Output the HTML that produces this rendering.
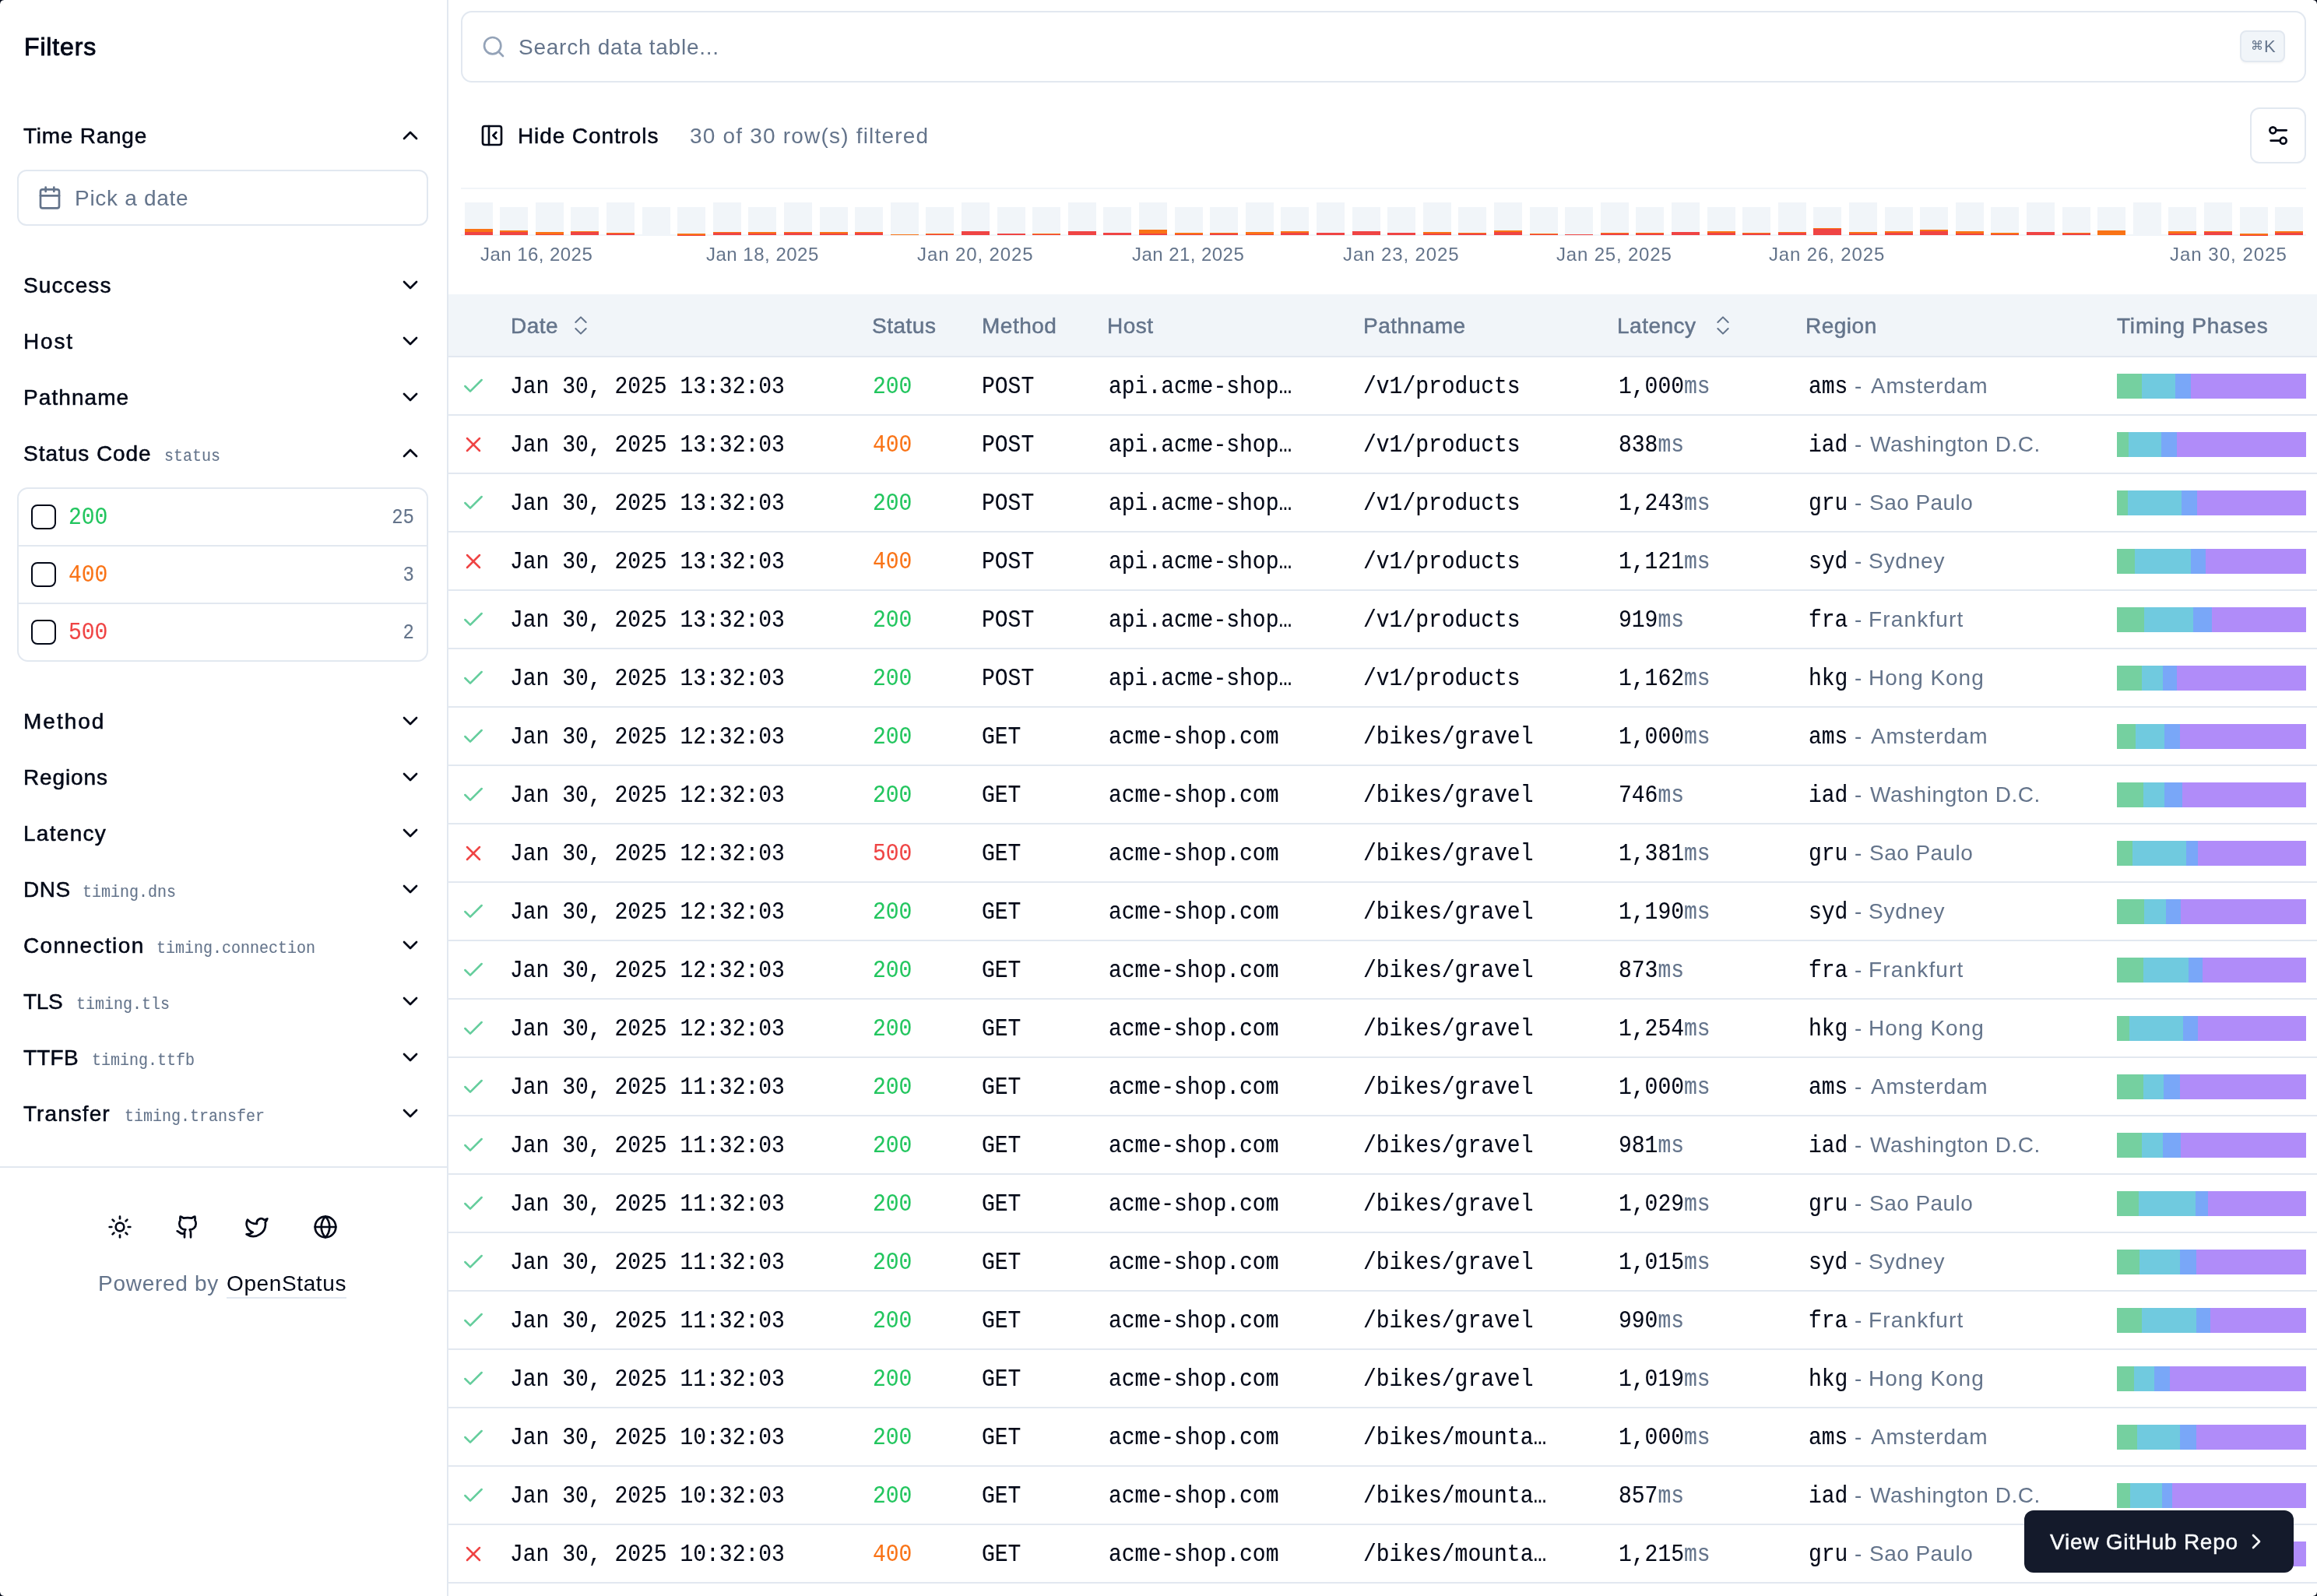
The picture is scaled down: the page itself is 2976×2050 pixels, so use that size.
<!DOCTYPE html><html><head><meta charset="utf-8"><style>
html,body{margin:0;padding:0;background:#fff;}
.root{position:absolute;left:0;top:0;width:2976px;height:2050px;will-change:transform;background:#fff;}
body{width:2976px;height:2050px;position:relative;overflow:hidden;font-family:"Liberation Sans", sans-serif;color:#020817;}
.t{position:absolute;white-space:nowrap;}
.m{font-family:"Liberation Mono", monospace;-webkit-text-stroke:0.1px currentColor;}
.ic{position:absolute;display:block;}
.b{position:absolute;box-sizing:border-box;}
@media (max-width: 2000px) { html{zoom:0.5;} }

</style></head><body><div class="root">
<div class="b" style="left:574px;top:0;width:2px;height:2050px;background:#e2e8f0"></div>
<div class="t" style="left:31px;top:44px;font-size:32px;line-height:32px;color:#020817;letter-spacing:0.85px;-webkit-text-stroke:0.9px currentColor;">Filters</div>
<div class="t" style="left:30px;top:161px;font-size:28px;line-height:28px;color:#020817;letter-spacing:0.75px;-webkit-text-stroke:0.5px currentColor;">Time Range</div>
<svg class="ic" style="left:511px;top:158px;" width="32" height="32" viewBox="0 0 24 24" fill="none" stroke="#020817" stroke-width="2" stroke-linecap="round" stroke-linejoin="round"><path d="m18 15-6-6-6 6"/></svg>
<div class="b" style="left:22px;top:218px;width:528px;height:72px;border:2px solid #e2e8f0;border-radius:12px"></div>
<svg class="ic" style="left:48px;top:238px;" width="32" height="32" viewBox="0 0 24 24" fill="none" stroke="#64748b" stroke-width="2" stroke-linecap="round" stroke-linejoin="round"><rect width="18" height="18" x="3" y="4" rx="2" ry="2"/><line x1="16" x2="16" y1="2" y2="6"/><line x1="8" x2="8" y1="2" y2="6"/><line x1="3" x2="21" y1="10" y2="10"/></svg>
<div class="t" style="left:96px;top:241px;font-size:28px;line-height:28px;color:#64748b;letter-spacing:0.7px;">Pick a date</div>
<div class="t" style="left:30px;top:353px;font-size:28px;line-height:28px;color:#020817;letter-spacing:1.1px;-webkit-text-stroke:0.5px currentColor;">Success</div>
<svg class="ic" style="left:511px;top:350px;" width="32" height="32" viewBox="0 0 24 24" fill="none" stroke="#020817" stroke-width="2" stroke-linecap="round" stroke-linejoin="round"><path d="m6 9 6 6 6-6"/></svg>
<div class="t" style="left:30px;top:425px;font-size:28px;line-height:28px;color:#020817;letter-spacing:1.8px;-webkit-text-stroke:0.5px currentColor;">Host</div>
<svg class="ic" style="left:511px;top:422px;" width="32" height="32" viewBox="0 0 24 24" fill="none" stroke="#020817" stroke-width="2" stroke-linecap="round" stroke-linejoin="round"><path d="m6 9 6 6 6-6"/></svg>
<div class="t" style="left:30px;top:497px;font-size:28px;line-height:28px;color:#020817;letter-spacing:1.07px;-webkit-text-stroke:0.5px currentColor;">Pathname</div>
<svg class="ic" style="left:511px;top:494px;" width="32" height="32" viewBox="0 0 24 24" fill="none" stroke="#020817" stroke-width="2" stroke-linecap="round" stroke-linejoin="round"><path d="m6 9 6 6 6-6"/></svg>
<div class="t" style="left:30px;top:569px;font-size:28px;line-height:28px;color:#020817;letter-spacing:0.96px;-webkit-text-stroke:0.5px currentColor;">Status Code</div>
<svg class="ic" style="left:511px;top:566px;" width="32" height="32" viewBox="0 0 24 24" fill="none" stroke="#020817" stroke-width="2" stroke-linecap="round" stroke-linejoin="round"><path d="m18 15-6-6-6 6"/></svg>
<div class="t m" style="left:211px;top:577px;font-size:20px;line-height:20px;color:#64748b;transform:scaleY(1.1);transform-origin:0 15px;">status</div>
<div class="b" style="left:22px;top:626px;width:528px;height:224px;border:2px solid #e2e8f0;border-radius:14px"></div>
<div class="b" style="left:24px;top:700px;width:524px;height:2px;background:#e2e8f0"></div>
<div class="b" style="left:24px;top:774px;width:524px;height:2px;background:#e2e8f0"></div>
<div class="b" style="left:40px;top:648px;width:32px;height:32px;border:2.5px solid #020817;border-radius:8px"></div>
<div class="t m" style="left:88px;top:652px;font-size:28px;line-height:28px;color:#22c55e;transform:scaleY(1.1);transform-origin:0 21px;">200</div>
<div class="t m" style="right:2444px;top:654px;font-size:24px;line-height:24px;color:#64748b;transform:scaleY(1.12);transform-origin:0 18px">25</div>
<div class="b" style="left:40px;top:722px;width:32px;height:32px;border:2.5px solid #020817;border-radius:8px"></div>
<div class="t m" style="left:88px;top:726px;font-size:28px;line-height:28px;color:#f97316;transform:scaleY(1.1);transform-origin:0 21px;">400</div>
<div class="t m" style="right:2444px;top:728px;font-size:24px;line-height:24px;color:#64748b;transform:scaleY(1.12);transform-origin:0 18px">3</div>
<div class="b" style="left:40px;top:796px;width:32px;height:32px;border:2.5px solid #020817;border-radius:8px"></div>
<div class="t m" style="left:88px;top:800px;font-size:28px;line-height:28px;color:#ef4444;transform:scaleY(1.1);transform-origin:0 21px;">500</div>
<div class="t m" style="right:2444px;top:802px;font-size:24px;line-height:24px;color:#64748b;transform:scaleY(1.12);transform-origin:0 18px">2</div>
<div class="t" style="left:30px;top:913px;font-size:28px;line-height:28px;color:#020817;letter-spacing:2.0px;-webkit-text-stroke:0.5px currentColor;">Method</div>
<svg class="ic" style="left:511px;top:910px;" width="32" height="32" viewBox="0 0 24 24" fill="none" stroke="#020817" stroke-width="2" stroke-linecap="round" stroke-linejoin="round"><path d="m6 9 6 6 6-6"/></svg>
<div class="t" style="left:30px;top:985px;font-size:28px;line-height:28px;color:#020817;letter-spacing:0.87px;-webkit-text-stroke:0.5px currentColor;">Regions</div>
<svg class="ic" style="left:511px;top:982px;" width="32" height="32" viewBox="0 0 24 24" fill="none" stroke="#020817" stroke-width="2" stroke-linecap="round" stroke-linejoin="round"><path d="m6 9 6 6 6-6"/></svg>
<div class="t" style="left:30px;top:1057px;font-size:28px;line-height:28px;color:#020817;letter-spacing:1.3px;-webkit-text-stroke:0.5px currentColor;">Latency</div>
<svg class="ic" style="left:511px;top:1054px;" width="32" height="32" viewBox="0 0 24 24" fill="none" stroke="#020817" stroke-width="2" stroke-linecap="round" stroke-linejoin="round"><path d="m6 9 6 6 6-6"/></svg>
<div class="t" style="left:30px;top:1129px;font-size:28px;line-height:28px;color:#020817;letter-spacing:0.5px;-webkit-text-stroke:0.5px currentColor;">DNS</div>
<svg class="ic" style="left:511px;top:1126px;" width="32" height="32" viewBox="0 0 24 24" fill="none" stroke="#020817" stroke-width="2" stroke-linecap="round" stroke-linejoin="round"><path d="m6 9 6 6 6-6"/></svg>
<div class="t m" style="left:106px;top:1137px;font-size:20px;line-height:20px;color:#64748b;transform:scaleY(1.1);transform-origin:0 15px;">timing.dns</div>
<div class="t" style="left:30px;top:1201px;font-size:28px;line-height:28px;color:#020817;letter-spacing:1.4px;-webkit-text-stroke:0.5px currentColor;">Connection</div>
<svg class="ic" style="left:511px;top:1198px;" width="32" height="32" viewBox="0 0 24 24" fill="none" stroke="#020817" stroke-width="2" stroke-linecap="round" stroke-linejoin="round"><path d="m6 9 6 6 6-6"/></svg>
<div class="t m" style="left:201px;top:1209px;font-size:20px;line-height:20px;color:#64748b;transform:scaleY(1.1);transform-origin:0 15px;">timing.connection</div>
<div class="t" style="left:30px;top:1273px;font-size:28px;line-height:28px;color:#020817;letter-spacing:-0.3px;-webkit-text-stroke:0.5px currentColor;">TLS</div>
<svg class="ic" style="left:511px;top:1270px;" width="32" height="32" viewBox="0 0 24 24" fill="none" stroke="#020817" stroke-width="2" stroke-linecap="round" stroke-linejoin="round"><path d="m6 9 6 6 6-6"/></svg>
<div class="t m" style="left:98px;top:1281px;font-size:20px;line-height:20px;color:#64748b;transform:scaleY(1.1);transform-origin:0 15px;">timing.tls</div>
<div class="t" style="left:30px;top:1345px;font-size:28px;line-height:28px;color:#020817;letter-spacing:0.2px;-webkit-text-stroke:0.5px currentColor;">TTFB</div>
<svg class="ic" style="left:511px;top:1342px;" width="32" height="32" viewBox="0 0 24 24" fill="none" stroke="#020817" stroke-width="2" stroke-linecap="round" stroke-linejoin="round"><path d="m6 9 6 6 6-6"/></svg>
<div class="t m" style="left:118px;top:1353px;font-size:20px;line-height:20px;color:#64748b;transform:scaleY(1.1);transform-origin:0 15px;">timing.ttfb</div>
<div class="t" style="left:30px;top:1417px;font-size:28px;line-height:28px;color:#020817;letter-spacing:1.06px;-webkit-text-stroke:0.5px currentColor;">Transfer</div>
<svg class="ic" style="left:511px;top:1414px;" width="32" height="32" viewBox="0 0 24 24" fill="none" stroke="#020817" stroke-width="2" stroke-linecap="round" stroke-linejoin="round"><path d="m6 9 6 6 6-6"/></svg>
<div class="t m" style="left:160px;top:1425px;font-size:20px;line-height:20px;color:#64748b;transform:scaleY(1.1);transform-origin:0 15px;">timing.transfer</div>
<div class="b" style="left:0;top:1498px;width:574px;height:2px;background:#e2e8f0"></div>
<svg class="ic" style="left:138px;top:1560px;" width="32" height="32" viewBox="0 0 24 24" fill="none" stroke="#020817" stroke-width="2" stroke-linecap="round" stroke-linejoin="round"><circle cx="12" cy="12" r="4"/><path d="M12 2v2"/><path d="M12 20v2"/><path d="m4.93 4.93 1.41 1.41"/><path d="m17.66 17.66 1.41 1.41"/><path d="M2 12h2"/><path d="M20 12h2"/><path d="m6.34 17.66-1.41 1.41"/><path d="m19.07 4.93-1.41 1.41"/></svg>
<svg class="ic" style="left:225px;top:1560px;" width="32" height="32" viewBox="0 0 24 24" fill="none" stroke="#020817" stroke-width="2" stroke-linecap="round" stroke-linejoin="round"><path d="M15 22v-4a4.8 4.8 0 0 0-1-3.5c3 0 6-2 6-5.5.08-1.25-.27-2.48-1-3.5.28-1.15.28-2.35 0-3.5 0 0-1 0-3 1.5-2.64-.5-5.36-.5-8 0C6 2 5 2 5 2c-.3 1.15-.3 2.35 0 3.5A5.403 5.403 0 0 0 4 9c0 3.5 3 5.5 6 5.5-.39.49-.68 1.05-.85 1.65-.17.6-.22 1.23-.15 1.85v4"/><path d="M9 18c-4.51 2-5-2-7-2"/></svg>
<svg class="ic" style="left:314px;top:1560px;" width="32" height="32" viewBox="0 0 24 24" fill="none" stroke="#020817" stroke-width="2" stroke-linecap="round" stroke-linejoin="round"><path d="M22 4s-.7 2.1-2 3.4c1.6 10-9.4 17.3-18 11.6 2.2.1 4.4-.6 6-2C3 15.5.5 9.6 3 5c2.2 2.6 5.6 4.1 9 4-.9-4.2 4-6.6 7-3.8 1.1 0 3-1.2 3-1.2z"/></svg>
<svg class="ic" style="left:402px;top:1560px;" width="32" height="32" viewBox="0 0 24 24" fill="none" stroke="#020817" stroke-width="2" stroke-linecap="round" stroke-linejoin="round"><circle cx="12" cy="12" r="10"/><path d="M12 2a14.5 14.5 0 0 0 0 20 14.5 14.5 0 0 0 0-20"/><path d="M2 12h20"/></svg>
<div class="t" style="left:126px;top:1635px;font-size:28px;line-height:28px;color:#64748b;letter-spacing:0.72px;">Powered by</div>
<div class="t" style="left:291px;top:1635px;font-size:28px;line-height:28px;color:#020817;letter-spacing:0.62px;">OpenStatus</div>
<div class="b" style="left:291px;top:1666px;width:154px;height:2px;background:#e2e8f0"></div>
<div class="b" style="left:592px;top:14px;width:2370px;height:92px;border:2px solid #e2e8f0;border-radius:14px"></div>
<svg class="ic" style="left:618px;top:44px;" width="32" height="32" viewBox="0 0 24 24" fill="none" stroke="#94a3b8" stroke-width="2" stroke-linecap="round" stroke-linejoin="round"><circle cx="11" cy="11" r="8"/><path d="m21 21-4.3-4.3"/></svg>
<div class="t" style="left:666px;top:47px;font-size:28px;line-height:28px;color:#64748b;letter-spacing:0.75px;">Search data table...</div>
<div class="b" style="left:2877px;top:39px;width:58px;height:41px;background:#f1f5f9;border:2px solid #e2e8f0;border-radius:8px;box-shadow:0 2px 2px rgba(0,0,0,0.03)"></div>
<div class="t" style="left:2891px;top:49px;font-size:16px;line-height:20px;color:#64748b">&#8984;</div>
<div class="t" style="left:2908px;top:49px;font-size:22px;line-height:22px;color:#64748b;">K</div>
<svg class="ic" style="left:616px;top:158px;" width="32" height="32" viewBox="0 0 24 24" fill="none" stroke="#020817" stroke-width="2" stroke-linecap="round" stroke-linejoin="round"><rect width="18" height="18" x="3" y="3" rx="2"/><path d="M9 3v18"/><path d="m16 15-3-3 3-3"/></svg>
<div class="t" style="left:665px;top:161px;font-size:28px;line-height:28px;color:#020817;letter-spacing:0.9px;-webkit-text-stroke:0.5px currentColor;">Hide Controls</div>
<div class="t" style="left:886px;top:161px;font-size:28px;line-height:28px;color:#64748b;letter-spacing:1.2px;">30 of 30 row(s) filtered</div>
<div class="b" style="left:2890px;top:138px;width:72px;height:72px;border:2px solid #e2e8f0;border-radius:12px"></div>
<svg class="ic" style="left:2910px;top:158px;" width="32" height="32" viewBox="0 0 24 24" fill="none" stroke="#020817" stroke-width="2" stroke-linecap="round" stroke-linejoin="round"><path d="M20 7h-9"/><path d="M14 17H5"/><circle cx="17" cy="17" r="3"/><circle cx="7" cy="7" r="3"/></svg>
<div class="b" style="left:592px;top:241px;width:2370px;height:2px;background:#f1f5f9"></div>
<div class="b" style="left:592px;top:301px;width:2370px;height:2px;background:#f1f5f9"></div>
<div class="b" style="left:596.5px;top:260px;width:36px;height:42px;background:#f1f5f9"></div>
<div class="b" style="left:596.5px;top:298px;width:36px;height:4px;background:#ef4444"></div>
<div class="b" style="left:596.5px;top:294px;width:36px;height:4px;background:#f97316"></div>
<div class="b" style="left:642.1px;top:266px;width:36px;height:36px;background:#f1f5f9"></div>
<div class="b" style="left:642.1px;top:298px;width:36px;height:4px;background:#ef4444"></div>
<div class="b" style="left:642.1px;top:296px;width:36px;height:2px;background:#f97316"></div>
<div class="b" style="left:687.7px;top:260px;width:36px;height:42px;background:#f1f5f9"></div>
<div class="b" style="left:687.7px;top:301px;width:36px;height:1px;background:#ef4444"></div>
<div class="b" style="left:687.7px;top:298px;width:36px;height:3px;background:#f97316"></div>
<div class="b" style="left:733.3px;top:266px;width:36px;height:36px;background:#f1f5f9"></div>
<div class="b" style="left:733.3px;top:297px;width:36px;height:5px;background:#ef4444"></div>
<div class="b" style="left:733.3px;top:296.5px;width:36px;height:0.5px;background:#f97316"></div>
<div class="b" style="left:778.9px;top:260px;width:36px;height:42px;background:#f1f5f9"></div>
<div class="b" style="left:778.9px;top:299px;width:36px;height:3px;background:#ef4444"></div>
<div class="b" style="left:778.9px;top:298.5px;width:36px;height:0.5px;background:#f97316"></div>
<div class="b" style="left:824.5px;top:266px;width:36px;height:36px;background:#f1f5f9"></div>
<div class="b" style="left:870.1px;top:266px;width:36px;height:36px;background:#f1f5f9"></div>
<div class="b" style="left:870.1px;top:301.5px;width:36px;height:0.5px;background:#ef4444"></div>
<div class="b" style="left:870.1px;top:299.5px;width:36px;height:2px;background:#f97316"></div>
<div class="b" style="left:915.7px;top:260px;width:36px;height:42px;background:#f1f5f9"></div>
<div class="b" style="left:915.7px;top:298px;width:36px;height:4px;background:#ef4444"></div>
<div class="b" style="left:915.7px;top:297.5px;width:36px;height:0.5px;background:#f97316"></div>
<div class="b" style="left:961.3px;top:266px;width:36px;height:36px;background:#f1f5f9"></div>
<div class="b" style="left:961.3px;top:300px;width:36px;height:2px;background:#ef4444"></div>
<div class="b" style="left:961.3px;top:298px;width:36px;height:2px;background:#f97316"></div>
<div class="b" style="left:1006.9px;top:260px;width:36px;height:42px;background:#f1f5f9"></div>
<div class="b" style="left:1006.9px;top:298px;width:36px;height:4px;background:#ef4444"></div>
<div class="b" style="left:1006.9px;top:297.5px;width:36px;height:0.5px;background:#f97316"></div>
<div class="b" style="left:1052.5px;top:266px;width:36px;height:36px;background:#f1f5f9"></div>
<div class="b" style="left:1052.5px;top:300px;width:36px;height:2px;background:#ef4444"></div>
<div class="b" style="left:1052.5px;top:298px;width:36px;height:2px;background:#f97316"></div>
<div class="b" style="left:1098.1px;top:266px;width:36px;height:36px;background:#f1f5f9"></div>
<div class="b" style="left:1098.1px;top:298px;width:36px;height:4px;background:#ef4444"></div>
<div class="b" style="left:1098.1px;top:297.5px;width:36px;height:0.5px;background:#f97316"></div>
<div class="b" style="left:1143.7px;top:260px;width:36px;height:42px;background:#f1f5f9"></div>
<div class="b" style="left:1143.7px;top:301px;width:36px;height:1px;background:#f97316"></div>
<div class="b" style="left:1189.3px;top:266px;width:36px;height:36px;background:#f1f5f9"></div>
<div class="b" style="left:1189.3px;top:300px;width:36px;height:2px;background:#ef4444"></div>
<div class="b" style="left:1189.3px;top:299.5px;width:36px;height:0.5px;background:#f97316"></div>
<div class="b" style="left:1234.9px;top:260px;width:36px;height:42px;background:#f1f5f9"></div>
<div class="b" style="left:1234.9px;top:297px;width:36px;height:5px;background:#ef4444"></div>
<div class="b" style="left:1280.5px;top:266px;width:36px;height:36px;background:#f1f5f9"></div>
<div class="b" style="left:1280.5px;top:300px;width:36px;height:2px;background:#ef4444"></div>
<div class="b" style="left:1326.1px;top:266px;width:36px;height:36px;background:#f1f5f9"></div>
<div class="b" style="left:1326.1px;top:300px;width:36px;height:2px;background:#ef4444"></div>
<div class="b" style="left:1326.1px;top:299.5px;width:36px;height:0.5px;background:#f97316"></div>
<div class="b" style="left:1371.7px;top:260px;width:36px;height:42px;background:#f1f5f9"></div>
<div class="b" style="left:1371.7px;top:297px;width:36px;height:5px;background:#ef4444"></div>
<div class="b" style="left:1417.3px;top:266px;width:36px;height:36px;background:#f1f5f9"></div>
<div class="b" style="left:1417.3px;top:299px;width:36px;height:3px;background:#ef4444"></div>
<div class="b" style="left:1462.9px;top:260px;width:36px;height:42px;background:#f1f5f9"></div>
<div class="b" style="left:1462.9px;top:300px;width:36px;height:2px;background:#ef4444"></div>
<div class="b" style="left:1462.9px;top:295px;width:36px;height:5px;background:#f97316"></div>
<div class="b" style="left:1508.5px;top:266px;width:36px;height:36px;background:#f1f5f9"></div>
<div class="b" style="left:1508.5px;top:301px;width:36px;height:1px;background:#ef4444"></div>
<div class="b" style="left:1508.5px;top:299px;width:36px;height:2px;background:#f97316"></div>
<div class="b" style="left:1554.1px;top:266px;width:36px;height:36px;background:#f1f5f9"></div>
<div class="b" style="left:1554.1px;top:300px;width:36px;height:2px;background:#ef4444"></div>
<div class="b" style="left:1554.1px;top:299px;width:36px;height:1px;background:#f97316"></div>
<div class="b" style="left:1599.7px;top:260px;width:36px;height:42px;background:#f1f5f9"></div>
<div class="b" style="left:1599.7px;top:301px;width:36px;height:1px;background:#ef4444"></div>
<div class="b" style="left:1599.7px;top:298px;width:36px;height:3px;background:#f97316"></div>
<div class="b" style="left:1645.3px;top:266px;width:36px;height:36px;background:#f1f5f9"></div>
<div class="b" style="left:1645.3px;top:299px;width:36px;height:3px;background:#ef4444"></div>
<div class="b" style="left:1645.3px;top:297px;width:36px;height:2px;background:#f97316"></div>
<div class="b" style="left:1690.9px;top:260px;width:36px;height:42px;background:#f1f5f9"></div>
<div class="b" style="left:1690.9px;top:299px;width:36px;height:3px;background:#ef4444"></div>
<div class="b" style="left:1736.5px;top:266px;width:36px;height:36px;background:#f1f5f9"></div>
<div class="b" style="left:1736.5px;top:297px;width:36px;height:5px;background:#ef4444"></div>
<div class="b" style="left:1782.1px;top:266px;width:36px;height:36px;background:#f1f5f9"></div>
<div class="b" style="left:1782.1px;top:299px;width:36px;height:3px;background:#ef4444"></div>
<div class="b" style="left:1827.7px;top:260px;width:36px;height:42px;background:#f1f5f9"></div>
<div class="b" style="left:1827.7px;top:300px;width:36px;height:2px;background:#ef4444"></div>
<div class="b" style="left:1827.7px;top:298px;width:36px;height:2px;background:#f97316"></div>
<div class="b" style="left:1873.3px;top:266px;width:36px;height:36px;background:#f1f5f9"></div>
<div class="b" style="left:1873.3px;top:300px;width:36px;height:2px;background:#ef4444"></div>
<div class="b" style="left:1873.3px;top:299px;width:36px;height:1px;background:#f97316"></div>
<div class="b" style="left:1918.9px;top:260px;width:36px;height:42px;background:#f1f5f9"></div>
<div class="b" style="left:1918.9px;top:298px;width:36px;height:4px;background:#ef4444"></div>
<div class="b" style="left:1918.9px;top:296px;width:36px;height:2px;background:#f97316"></div>
<div class="b" style="left:1964.5px;top:266px;width:36px;height:36px;background:#f1f5f9"></div>
<div class="b" style="left:1964.5px;top:301px;width:36px;height:1px;background:#ef4444"></div>
<div class="b" style="left:1964.5px;top:300px;width:36px;height:1px;background:#f97316"></div>
<div class="b" style="left:2010.1px;top:266px;width:36px;height:36px;background:#f1f5f9"></div>
<div class="b" style="left:2010.1px;top:301px;width:36px;height:1px;background:#ef4444"></div>
<div class="b" style="left:2055.7px;top:260px;width:36px;height:42px;background:#f1f5f9"></div>
<div class="b" style="left:2055.7px;top:300px;width:36px;height:2px;background:#ef4444"></div>
<div class="b" style="left:2055.7px;top:299px;width:36px;height:1px;background:#f97316"></div>
<div class="b" style="left:2101.3px;top:266px;width:36px;height:36px;background:#f1f5f9"></div>
<div class="b" style="left:2101.3px;top:300px;width:36px;height:2px;background:#ef4444"></div>
<div class="b" style="left:2101.3px;top:299px;width:36px;height:1px;background:#f97316"></div>
<div class="b" style="left:2146.9px;top:260px;width:36px;height:42px;background:#f1f5f9"></div>
<div class="b" style="left:2146.9px;top:298px;width:36px;height:4px;background:#ef4444"></div>
<div class="b" style="left:2192.5px;top:266px;width:36px;height:36px;background:#f1f5f9"></div>
<div class="b" style="left:2192.5px;top:299px;width:36px;height:3px;background:#ef4444"></div>
<div class="b" style="left:2192.5px;top:297px;width:36px;height:2px;background:#f97316"></div>
<div class="b" style="left:2238.1px;top:266px;width:36px;height:36px;background:#f1f5f9"></div>
<div class="b" style="left:2238.1px;top:300px;width:36px;height:2px;background:#ef4444"></div>
<div class="b" style="left:2238.1px;top:299px;width:36px;height:1px;background:#f97316"></div>
<div class="b" style="left:2283.7px;top:260px;width:36px;height:42px;background:#f1f5f9"></div>
<div class="b" style="left:2283.7px;top:299px;width:36px;height:3px;background:#ef4444"></div>
<div class="b" style="left:2283.7px;top:298px;width:36px;height:1px;background:#f97316"></div>
<div class="b" style="left:2329.3px;top:266px;width:36px;height:36px;background:#f1f5f9"></div>
<div class="b" style="left:2329.3px;top:293px;width:36px;height:9px;background:#ef4444"></div>
<div class="b" style="left:2329.3px;top:292.5px;width:36px;height:0.5px;background:#f97316"></div>
<div class="b" style="left:2374.9px;top:260px;width:36px;height:42px;background:#f1f5f9"></div>
<div class="b" style="left:2374.9px;top:300px;width:36px;height:2px;background:#ef4444"></div>
<div class="b" style="left:2374.9px;top:298px;width:36px;height:2px;background:#f97316"></div>
<div class="b" style="left:2420.5px;top:266px;width:36px;height:36px;background:#f1f5f9"></div>
<div class="b" style="left:2420.5px;top:299px;width:36px;height:3px;background:#ef4444"></div>
<div class="b" style="left:2420.5px;top:297px;width:36px;height:2px;background:#f97316"></div>
<div class="b" style="left:2466.1px;top:266px;width:36px;height:36px;background:#f1f5f9"></div>
<div class="b" style="left:2466.1px;top:297px;width:36px;height:5px;background:#ef4444"></div>
<div class="b" style="left:2466.1px;top:295px;width:36px;height:2px;background:#f97316"></div>
<div class="b" style="left:2511.7px;top:260px;width:36px;height:42px;background:#f1f5f9"></div>
<div class="b" style="left:2511.7px;top:300px;width:36px;height:2px;background:#ef4444"></div>
<div class="b" style="left:2511.7px;top:297px;width:36px;height:3px;background:#f97316"></div>
<div class="b" style="left:2557.3px;top:266px;width:36px;height:36px;background:#f1f5f9"></div>
<div class="b" style="left:2557.3px;top:301px;width:36px;height:1px;background:#ef4444"></div>
<div class="b" style="left:2557.3px;top:299px;width:36px;height:2px;background:#f97316"></div>
<div class="b" style="left:2602.9px;top:260px;width:36px;height:42px;background:#f1f5f9"></div>
<div class="b" style="left:2602.9px;top:298px;width:36px;height:4px;background:#ef4444"></div>
<div class="b" style="left:2648.5px;top:266px;width:36px;height:36px;background:#f1f5f9"></div>
<div class="b" style="left:2648.5px;top:300px;width:36px;height:2px;background:#ef4444"></div>
<div class="b" style="left:2648.5px;top:299px;width:36px;height:1px;background:#f97316"></div>
<div class="b" style="left:2694.1px;top:266px;width:36px;height:36px;background:#f1f5f9"></div>
<div class="b" style="left:2694.1px;top:296px;width:36px;height:6px;background:#f97316"></div>
<div class="b" style="left:2739.7px;top:260px;width:36px;height:42px;background:#f1f5f9"></div>
<div class="b" style="left:2785.3px;top:266px;width:36px;height:36px;background:#f1f5f9"></div>
<div class="b" style="left:2785.3px;top:300px;width:36px;height:2px;background:#ef4444"></div>
<div class="b" style="left:2785.3px;top:297px;width:36px;height:3px;background:#f97316"></div>
<div class="b" style="left:2830.9px;top:260px;width:36px;height:42px;background:#f1f5f9"></div>
<div class="b" style="left:2830.9px;top:297.5px;width:36px;height:4.5px;background:#ef4444"></div>
<div class="b" style="left:2830.9px;top:297.0px;width:36px;height:0.5px;background:#f97316"></div>
<div class="b" style="left:2876.5px;top:266px;width:36px;height:36px;background:#f1f5f9"></div>
<div class="b" style="left:2876.5px;top:301.5px;width:36px;height:0.5px;background:#ef4444"></div>
<div class="b" style="left:2876.5px;top:300.0px;width:36px;height:1.5px;background:#f97316"></div>
<div class="b" style="left:2922.1px;top:266px;width:36px;height:36px;background:#f1f5f9"></div>
<div class="b" style="left:2922.1px;top:299px;width:36px;height:3px;background:#ef4444"></div>
<div class="b" style="left:2922.1px;top:297px;width:36px;height:2px;background:#f97316"></div>
<div class="t" style="left:617px;top:315px;font-size:24px;line-height:24px;color:#64748b;letter-spacing:0.45px;">Jan 16, 2025</div>
<div class="t" style="left:907px;top:315px;font-size:24px;line-height:24px;color:#64748b;letter-spacing:0.5px;">Jan 18, 2025</div>
<div class="t" style="left:1178px;top:315px;font-size:24px;line-height:24px;color:#64748b;letter-spacing:0.9px;">Jan 20, 2025</div>
<div class="t" style="left:1454px;top:315px;font-size:24px;line-height:24px;color:#64748b;letter-spacing:0.45px;">Jan 21, 2025</div>
<div class="t" style="left:1725px;top:315px;font-size:24px;line-height:24px;color:#64748b;letter-spacing:0.9px;">Jan 23, 2025</div>
<div class="t" style="left:1999px;top:315px;font-size:24px;line-height:24px;color:#64748b;letter-spacing:0.82px;">Jan 25, 2025</div>
<div class="t" style="left:2272px;top:315px;font-size:24px;line-height:24px;color:#64748b;letter-spacing:0.86px;">Jan 26, 2025</div>
<div class="t" style="left:2787px;top:315px;font-size:24px;line-height:24px;color:#64748b;letter-spacing:1.0px;">Jan 30, 2025</div>
<div class="b" style="left:576px;top:378px;width:2400px;height:79px;background:#f1f5f9"></div>
<div class="b" style="left:576px;top:457px;width:2400px;height:2px;background:#e2e8f0"></div>
<div class="t" style="left:656px;top:405px;font-size:28px;line-height:28px;color:#64748b;letter-spacing:0.5px;-webkit-text-stroke:0.5px currentColor;">Date</div>
<div class="t" style="left:1120px;top:405px;font-size:28px;line-height:28px;color:#64748b;letter-spacing:0.5px;-webkit-text-stroke:0.5px currentColor;">Status</div>
<div class="t" style="left:1261px;top:405px;font-size:28px;line-height:28px;color:#64748b;letter-spacing:0.5px;-webkit-text-stroke:0.5px currentColor;">Method</div>
<div class="t" style="left:1422px;top:405px;font-size:28px;line-height:28px;color:#64748b;letter-spacing:0.5px;-webkit-text-stroke:0.5px currentColor;">Host</div>
<div class="t" style="left:1751px;top:405px;font-size:28px;line-height:28px;color:#64748b;letter-spacing:0.5px;-webkit-text-stroke:0.5px currentColor;">Pathname</div>
<div class="t" style="left:2077px;top:405px;font-size:28px;line-height:28px;color:#64748b;letter-spacing:0.5px;-webkit-text-stroke:0.5px currentColor;">Latency</div>
<div class="t" style="left:2319px;top:405px;font-size:28px;line-height:28px;color:#64748b;letter-spacing:0.5px;-webkit-text-stroke:0.5px currentColor;">Region</div>
<div class="t" style="left:2719px;top:405px;font-size:28px;line-height:28px;color:#64748b;letter-spacing:0.8px;-webkit-text-stroke:0.5px currentColor;">Timing Phases</div>
<svg class="ic" style="left:730px;top:402px;" width="32" height="32" viewBox="0 0 24 24" fill="none" stroke="#64748b" stroke-width="1.5" stroke-linecap="round" stroke-linejoin="round"><path d="m7 15 5 5 5-5"/><path d="m7 9 5-5 5 5"/></svg>
<svg class="ic" style="left:2197px;top:402px;" width="32" height="32" viewBox="0 0 24 24" fill="none" stroke="#64748b" stroke-width="1.5" stroke-linecap="round" stroke-linejoin="round"><path d="m7 15 5 5 5-5"/><path d="m7 9 5-5 5 5"/></svg>
<div class="b" style="left:576px;top:532px;width:2400px;height:2px;background:#e2e8f0"></div>
<svg class="ic" style="left:592px;top:480px;" width="32" height="32" viewBox="0 0 24 24" fill="none" stroke="#64cd9c" stroke-width="1.9" stroke-linecap="round" stroke-linejoin="round"><path d="M20 6 9 17l-5-5"/></svg>
<div class="t m" style="left:655px;top:484px;font-size:28px;line-height:28px;color:#020817;transform:scaleY(1.1);transform-origin:0 21px;">Jan 30, 2025 13:32:03</div>
<div class="t m" style="left:1121px;top:484px;font-size:28px;line-height:28px;color:#22c55e;transform:scaleY(1.1);transform-origin:0 21px;">200</div>
<div class="t m" style="left:1261px;top:484px;font-size:28px;line-height:28px;color:#020817;transform:scaleY(1.1);transform-origin:0 21px;">POST</div>
<div class="t m" style="left:1424px;top:484px;font-size:28px;line-height:28px;color:#020817;transform:scaleY(1.1);transform-origin:0 21px;">api.acme-shop…</div>
<div class="t m" style="left:1751px;top:484px;font-size:28px;line-height:28px;color:#020817;transform:scaleY(1.1);transform-origin:0 21px;">/v1/products</div>
<div class="t m" style="left:2079px;top:484px;font-size:28px;line-height:28px;color:#020817;transform:scaleY(1.1);transform-origin:0 21px;">1,000<span style="color:#64748b">ms</span></div>
<div class="t m" style="left:2323px;top:484px;font-size:28px;line-height:28px;color:#020817;transform:scaleY(1.1);transform-origin:0 21px;">ams</div>
<div class="t" style="left:2382px;top:482px;font-size:28px;line-height:28px;color:#64748b;">-</div>
<div class="t" style="left:2403px;top:482px;font-size:28px;line-height:28px;color:#64748b;letter-spacing:0.8px;">Amsterdam</div>
<div class="b" style="left:2719px;top:480px;width:32.0px;height:32px;background:#75d0a0"></div>
<div class="b" style="left:2751.0px;top:480px;width:42.9px;height:32px;background:#70cadf"></div>
<div class="b" style="left:2793.9px;top:480px;width:20.1px;height:32px;background:#79a7f8"></div>
<div class="b" style="left:2814.0px;top:480px;width:148.0px;height:32px;background:#b08cf9"></div>
<div class="b" style="left:576px;top:607px;width:2400px;height:2px;background:#e2e8f0"></div>
<svg class="ic" style="left:592px;top:555px;" width="32" height="32" viewBox="0 0 24 24" fill="none" stroke="#ef4444" stroke-width="1.9" stroke-linecap="round" stroke-linejoin="round"><path d="M18 6 6 18"/><path d="m6 6 12 12"/></svg>
<div class="t m" style="left:655px;top:559px;font-size:28px;line-height:28px;color:#020817;transform:scaleY(1.1);transform-origin:0 21px;">Jan 30, 2025 13:32:03</div>
<div class="t m" style="left:1121px;top:559px;font-size:28px;line-height:28px;color:#f97316;transform:scaleY(1.1);transform-origin:0 21px;">400</div>
<div class="t m" style="left:1261px;top:559px;font-size:28px;line-height:28px;color:#020817;transform:scaleY(1.1);transform-origin:0 21px;">POST</div>
<div class="t m" style="left:1424px;top:559px;font-size:28px;line-height:28px;color:#020817;transform:scaleY(1.1);transform-origin:0 21px;">api.acme-shop…</div>
<div class="t m" style="left:1751px;top:559px;font-size:28px;line-height:28px;color:#020817;transform:scaleY(1.1);transform-origin:0 21px;">/v1/products</div>
<div class="t m" style="left:2079px;top:559px;font-size:28px;line-height:28px;color:#020817;transform:scaleY(1.1);transform-origin:0 21px;">838<span style="color:#64748b">ms</span></div>
<div class="t m" style="left:2323px;top:559px;font-size:28px;line-height:28px;color:#020817;transform:scaleY(1.1);transform-origin:0 21px;">iad</div>
<div class="t" style="left:2382px;top:557px;font-size:28px;line-height:28px;color:#64748b;">-</div>
<div class="t" style="left:2402px;top:557px;font-size:28px;line-height:28px;color:#64748b;letter-spacing:0.55px;">Washington D.C.</div>
<div class="b" style="left:2719px;top:555px;width:14.9px;height:32px;background:#75d0a0"></div>
<div class="b" style="left:2733.9px;top:555px;width:42.1px;height:32px;background:#70cadf"></div>
<div class="b" style="left:2776.0px;top:555px;width:19.9px;height:32px;background:#79a7f8"></div>
<div class="b" style="left:2795.9px;top:555px;width:166.1px;height:32px;background:#b08cf9"></div>
<div class="b" style="left:576px;top:682px;width:2400px;height:2px;background:#e2e8f0"></div>
<svg class="ic" style="left:592px;top:630px;" width="32" height="32" viewBox="0 0 24 24" fill="none" stroke="#64cd9c" stroke-width="1.9" stroke-linecap="round" stroke-linejoin="round"><path d="M20 6 9 17l-5-5"/></svg>
<div class="t m" style="left:655px;top:634px;font-size:28px;line-height:28px;color:#020817;transform:scaleY(1.1);transform-origin:0 21px;">Jan 30, 2025 13:32:03</div>
<div class="t m" style="left:1121px;top:634px;font-size:28px;line-height:28px;color:#22c55e;transform:scaleY(1.1);transform-origin:0 21px;">200</div>
<div class="t m" style="left:1261px;top:634px;font-size:28px;line-height:28px;color:#020817;transform:scaleY(1.1);transform-origin:0 21px;">POST</div>
<div class="t m" style="left:1424px;top:634px;font-size:28px;line-height:28px;color:#020817;transform:scaleY(1.1);transform-origin:0 21px;">api.acme-shop…</div>
<div class="t m" style="left:1751px;top:634px;font-size:28px;line-height:28px;color:#020817;transform:scaleY(1.1);transform-origin:0 21px;">/v1/products</div>
<div class="t m" style="left:2079px;top:634px;font-size:28px;line-height:28px;color:#020817;transform:scaleY(1.1);transform-origin:0 21px;">1,243<span style="color:#64748b">ms</span></div>
<div class="t m" style="left:2323px;top:634px;font-size:28px;line-height:28px;color:#020817;transform:scaleY(1.1);transform-origin:0 21px;">gru</div>
<div class="t" style="left:2382px;top:632px;font-size:28px;line-height:28px;color:#64748b;">-</div>
<div class="t" style="left:2401px;top:632px;font-size:28px;line-height:28px;color:#64748b;letter-spacing:0.45px;">Sao Paulo</div>
<div class="b" style="left:2719px;top:630px;width:14.1px;height:32px;background:#75d0a0"></div>
<div class="b" style="left:2733.1px;top:630px;width:68.8px;height:32px;background:#70cadf"></div>
<div class="b" style="left:2801.9px;top:630px;width:20.2px;height:32px;background:#79a7f8"></div>
<div class="b" style="left:2822.1px;top:630px;width:139.9px;height:32px;background:#b08cf9"></div>
<div class="b" style="left:576px;top:757px;width:2400px;height:2px;background:#e2e8f0"></div>
<svg class="ic" style="left:592px;top:705px;" width="32" height="32" viewBox="0 0 24 24" fill="none" stroke="#ef4444" stroke-width="1.9" stroke-linecap="round" stroke-linejoin="round"><path d="M18 6 6 18"/><path d="m6 6 12 12"/></svg>
<div class="t m" style="left:655px;top:709px;font-size:28px;line-height:28px;color:#020817;transform:scaleY(1.1);transform-origin:0 21px;">Jan 30, 2025 13:32:03</div>
<div class="t m" style="left:1121px;top:709px;font-size:28px;line-height:28px;color:#f97316;transform:scaleY(1.1);transform-origin:0 21px;">400</div>
<div class="t m" style="left:1261px;top:709px;font-size:28px;line-height:28px;color:#020817;transform:scaleY(1.1);transform-origin:0 21px;">POST</div>
<div class="t m" style="left:1424px;top:709px;font-size:28px;line-height:28px;color:#020817;transform:scaleY(1.1);transform-origin:0 21px;">api.acme-shop…</div>
<div class="t m" style="left:1751px;top:709px;font-size:28px;line-height:28px;color:#020817;transform:scaleY(1.1);transform-origin:0 21px;">/v1/products</div>
<div class="t m" style="left:2079px;top:709px;font-size:28px;line-height:28px;color:#020817;transform:scaleY(1.1);transform-origin:0 21px;">1,121<span style="color:#64748b">ms</span></div>
<div class="t m" style="left:2323px;top:709px;font-size:28px;line-height:28px;color:#020817;transform:scaleY(1.1);transform-origin:0 21px;">syd</div>
<div class="t" style="left:2382px;top:707px;font-size:28px;line-height:28px;color:#64748b;">-</div>
<div class="t" style="left:2400px;top:707px;font-size:28px;line-height:28px;color:#64748b;letter-spacing:0.8px;">Sydney</div>
<div class="b" style="left:2719px;top:705px;width:23.0px;height:32px;background:#75d0a0"></div>
<div class="b" style="left:2742.0px;top:705px;width:72.0px;height:32px;background:#70cadf"></div>
<div class="b" style="left:2814.0px;top:705px;width:19.1px;height:32px;background:#79a7f8"></div>
<div class="b" style="left:2833.1px;top:705px;width:128.9px;height:32px;background:#b08cf9"></div>
<div class="b" style="left:576px;top:832px;width:2400px;height:2px;background:#e2e8f0"></div>
<svg class="ic" style="left:592px;top:780px;" width="32" height="32" viewBox="0 0 24 24" fill="none" stroke="#64cd9c" stroke-width="1.9" stroke-linecap="round" stroke-linejoin="round"><path d="M20 6 9 17l-5-5"/></svg>
<div class="t m" style="left:655px;top:784px;font-size:28px;line-height:28px;color:#020817;transform:scaleY(1.1);transform-origin:0 21px;">Jan 30, 2025 13:32:03</div>
<div class="t m" style="left:1121px;top:784px;font-size:28px;line-height:28px;color:#22c55e;transform:scaleY(1.1);transform-origin:0 21px;">200</div>
<div class="t m" style="left:1261px;top:784px;font-size:28px;line-height:28px;color:#020817;transform:scaleY(1.1);transform-origin:0 21px;">POST</div>
<div class="t m" style="left:1424px;top:784px;font-size:28px;line-height:28px;color:#020817;transform:scaleY(1.1);transform-origin:0 21px;">api.acme-shop…</div>
<div class="t m" style="left:1751px;top:784px;font-size:28px;line-height:28px;color:#020817;transform:scaleY(1.1);transform-origin:0 21px;">/v1/products</div>
<div class="t m" style="left:2079px;top:784px;font-size:28px;line-height:28px;color:#020817;transform:scaleY(1.1);transform-origin:0 21px;">919<span style="color:#64748b">ms</span></div>
<div class="t m" style="left:2323px;top:784px;font-size:28px;line-height:28px;color:#020817;transform:scaleY(1.1);transform-origin:0 21px;">fra</div>
<div class="t" style="left:2382px;top:782px;font-size:28px;line-height:28px;color:#64748b;">-</div>
<div class="t" style="left:2400px;top:782px;font-size:28px;line-height:28px;color:#64748b;letter-spacing:1.17px;">Frankfurt</div>
<div class="b" style="left:2719px;top:780px;width:35.2px;height:32px;background:#75d0a0"></div>
<div class="b" style="left:2754.2px;top:780px;width:62.8px;height:32px;background:#70cadf"></div>
<div class="b" style="left:2817.0px;top:780px;width:24.0px;height:32px;background:#79a7f8"></div>
<div class="b" style="left:2841.0px;top:780px;width:121.0px;height:32px;background:#b08cf9"></div>
<div class="b" style="left:576px;top:907px;width:2400px;height:2px;background:#e2e8f0"></div>
<svg class="ic" style="left:592px;top:855px;" width="32" height="32" viewBox="0 0 24 24" fill="none" stroke="#64cd9c" stroke-width="1.9" stroke-linecap="round" stroke-linejoin="round"><path d="M20 6 9 17l-5-5"/></svg>
<div class="t m" style="left:655px;top:859px;font-size:28px;line-height:28px;color:#020817;transform:scaleY(1.1);transform-origin:0 21px;">Jan 30, 2025 13:32:03</div>
<div class="t m" style="left:1121px;top:859px;font-size:28px;line-height:28px;color:#22c55e;transform:scaleY(1.1);transform-origin:0 21px;">200</div>
<div class="t m" style="left:1261px;top:859px;font-size:28px;line-height:28px;color:#020817;transform:scaleY(1.1);transform-origin:0 21px;">POST</div>
<div class="t m" style="left:1424px;top:859px;font-size:28px;line-height:28px;color:#020817;transform:scaleY(1.1);transform-origin:0 21px;">api.acme-shop…</div>
<div class="t m" style="left:1751px;top:859px;font-size:28px;line-height:28px;color:#020817;transform:scaleY(1.1);transform-origin:0 21px;">/v1/products</div>
<div class="t m" style="left:2079px;top:859px;font-size:28px;line-height:28px;color:#020817;transform:scaleY(1.1);transform-origin:0 21px;">1,162<span style="color:#64748b">ms</span></div>
<div class="t m" style="left:2323px;top:859px;font-size:28px;line-height:28px;color:#020817;transform:scaleY(1.1);transform-origin:0 21px;">hkg</div>
<div class="t" style="left:2382px;top:857px;font-size:28px;line-height:28px;color:#64748b;">-</div>
<div class="t" style="left:2400px;top:857px;font-size:28px;line-height:28px;color:#64748b;letter-spacing:0.95px;">Hong Kong</div>
<div class="b" style="left:2719px;top:855px;width:32.0px;height:32px;background:#75d0a0"></div>
<div class="b" style="left:2751.0px;top:855px;width:27.1px;height:32px;background:#70cadf"></div>
<div class="b" style="left:2778.1px;top:855px;width:17.8px;height:32px;background:#79a7f8"></div>
<div class="b" style="left:2795.9px;top:855px;width:166.1px;height:32px;background:#b08cf9"></div>
<div class="b" style="left:576px;top:982px;width:2400px;height:2px;background:#e2e8f0"></div>
<svg class="ic" style="left:592px;top:930px;" width="32" height="32" viewBox="0 0 24 24" fill="none" stroke="#64cd9c" stroke-width="1.9" stroke-linecap="round" stroke-linejoin="round"><path d="M20 6 9 17l-5-5"/></svg>
<div class="t m" style="left:655px;top:934px;font-size:28px;line-height:28px;color:#020817;transform:scaleY(1.1);transform-origin:0 21px;">Jan 30, 2025 12:32:03</div>
<div class="t m" style="left:1121px;top:934px;font-size:28px;line-height:28px;color:#22c55e;transform:scaleY(1.1);transform-origin:0 21px;">200</div>
<div class="t m" style="left:1261px;top:934px;font-size:28px;line-height:28px;color:#020817;transform:scaleY(1.1);transform-origin:0 21px;">GET</div>
<div class="t m" style="left:1424px;top:934px;font-size:28px;line-height:28px;color:#020817;transform:scaleY(1.1);transform-origin:0 21px;">acme-shop.com</div>
<div class="t m" style="left:1751px;top:934px;font-size:28px;line-height:28px;color:#020817;transform:scaleY(1.1);transform-origin:0 21px;">/bikes/gravel</div>
<div class="t m" style="left:2079px;top:934px;font-size:28px;line-height:28px;color:#020817;transform:scaleY(1.1);transform-origin:0 21px;">1,000<span style="color:#64748b">ms</span></div>
<div class="t m" style="left:2323px;top:934px;font-size:28px;line-height:28px;color:#020817;transform:scaleY(1.1);transform-origin:0 21px;">ams</div>
<div class="t" style="left:2382px;top:932px;font-size:28px;line-height:28px;color:#64748b;">-</div>
<div class="t" style="left:2403px;top:932px;font-size:28px;line-height:28px;color:#64748b;letter-spacing:0.8px;">Amsterdam</div>
<div class="b" style="left:2719px;top:930px;width:23.9px;height:32px;background:#75d0a0"></div>
<div class="b" style="left:2742.9px;top:930px;width:37.0px;height:32px;background:#70cadf"></div>
<div class="b" style="left:2779.9px;top:930px;width:20.2px;height:32px;background:#79a7f8"></div>
<div class="b" style="left:2800.1px;top:930px;width:161.9px;height:32px;background:#b08cf9"></div>
<div class="b" style="left:576px;top:1057px;width:2400px;height:2px;background:#e2e8f0"></div>
<svg class="ic" style="left:592px;top:1005px;" width="32" height="32" viewBox="0 0 24 24" fill="none" stroke="#64cd9c" stroke-width="1.9" stroke-linecap="round" stroke-linejoin="round"><path d="M20 6 9 17l-5-5"/></svg>
<div class="t m" style="left:655px;top:1009px;font-size:28px;line-height:28px;color:#020817;transform:scaleY(1.1);transform-origin:0 21px;">Jan 30, 2025 12:32:03</div>
<div class="t m" style="left:1121px;top:1009px;font-size:28px;line-height:28px;color:#22c55e;transform:scaleY(1.1);transform-origin:0 21px;">200</div>
<div class="t m" style="left:1261px;top:1009px;font-size:28px;line-height:28px;color:#020817;transform:scaleY(1.1);transform-origin:0 21px;">GET</div>
<div class="t m" style="left:1424px;top:1009px;font-size:28px;line-height:28px;color:#020817;transform:scaleY(1.1);transform-origin:0 21px;">acme-shop.com</div>
<div class="t m" style="left:1751px;top:1009px;font-size:28px;line-height:28px;color:#020817;transform:scaleY(1.1);transform-origin:0 21px;">/bikes/gravel</div>
<div class="t m" style="left:2079px;top:1009px;font-size:28px;line-height:28px;color:#020817;transform:scaleY(1.1);transform-origin:0 21px;">746<span style="color:#64748b">ms</span></div>
<div class="t m" style="left:2323px;top:1009px;font-size:28px;line-height:28px;color:#020817;transform:scaleY(1.1);transform-origin:0 21px;">iad</div>
<div class="t" style="left:2382px;top:1007px;font-size:28px;line-height:28px;color:#64748b;">-</div>
<div class="t" style="left:2402px;top:1007px;font-size:28px;line-height:28px;color:#64748b;letter-spacing:0.55px;">Washington D.C.</div>
<div class="b" style="left:2719px;top:1005px;width:34.1px;height:32px;background:#75d0a0"></div>
<div class="b" style="left:2753.1px;top:1005px;width:26.8px;height:32px;background:#70cadf"></div>
<div class="b" style="left:2779.9px;top:1005px;width:23.0px;height:32px;background:#79a7f8"></div>
<div class="b" style="left:2802.9px;top:1005px;width:159.1px;height:32px;background:#b08cf9"></div>
<div class="b" style="left:576px;top:1132px;width:2400px;height:2px;background:#e2e8f0"></div>
<svg class="ic" style="left:592px;top:1080px;" width="32" height="32" viewBox="0 0 24 24" fill="none" stroke="#ef4444" stroke-width="1.9" stroke-linecap="round" stroke-linejoin="round"><path d="M18 6 6 18"/><path d="m6 6 12 12"/></svg>
<div class="t m" style="left:655px;top:1084px;font-size:28px;line-height:28px;color:#020817;transform:scaleY(1.1);transform-origin:0 21px;">Jan 30, 2025 12:32:03</div>
<div class="t m" style="left:1121px;top:1084px;font-size:28px;line-height:28px;color:#ef4444;transform:scaleY(1.1);transform-origin:0 21px;">500</div>
<div class="t m" style="left:1261px;top:1084px;font-size:28px;line-height:28px;color:#020817;transform:scaleY(1.1);transform-origin:0 21px;">GET</div>
<div class="t m" style="left:1424px;top:1084px;font-size:28px;line-height:28px;color:#020817;transform:scaleY(1.1);transform-origin:0 21px;">acme-shop.com</div>
<div class="t m" style="left:1751px;top:1084px;font-size:28px;line-height:28px;color:#020817;transform:scaleY(1.1);transform-origin:0 21px;">/bikes/gravel</div>
<div class="t m" style="left:2079px;top:1084px;font-size:28px;line-height:28px;color:#020817;transform:scaleY(1.1);transform-origin:0 21px;">1,381<span style="color:#64748b">ms</span></div>
<div class="t m" style="left:2323px;top:1084px;font-size:28px;line-height:28px;color:#020817;transform:scaleY(1.1);transform-origin:0 21px;">gru</div>
<div class="t" style="left:2382px;top:1082px;font-size:28px;line-height:28px;color:#64748b;">-</div>
<div class="t" style="left:2401px;top:1082px;font-size:28px;line-height:28px;color:#64748b;letter-spacing:0.45px;">Sao Paulo</div>
<div class="b" style="left:2719px;top:1080px;width:20.0px;height:32px;background:#75d0a0"></div>
<div class="b" style="left:2739.0px;top:1080px;width:69.0px;height:32px;background:#70cadf"></div>
<div class="b" style="left:2808.0px;top:1080px;width:15.2px;height:32px;background:#79a7f8"></div>
<div class="b" style="left:2823.2px;top:1080px;width:138.8px;height:32px;background:#b08cf9"></div>
<div class="b" style="left:576px;top:1207px;width:2400px;height:2px;background:#e2e8f0"></div>
<svg class="ic" style="left:592px;top:1155px;" width="32" height="32" viewBox="0 0 24 24" fill="none" stroke="#64cd9c" stroke-width="1.9" stroke-linecap="round" stroke-linejoin="round"><path d="M20 6 9 17l-5-5"/></svg>
<div class="t m" style="left:655px;top:1159px;font-size:28px;line-height:28px;color:#020817;transform:scaleY(1.1);transform-origin:0 21px;">Jan 30, 2025 12:32:03</div>
<div class="t m" style="left:1121px;top:1159px;font-size:28px;line-height:28px;color:#22c55e;transform:scaleY(1.1);transform-origin:0 21px;">200</div>
<div class="t m" style="left:1261px;top:1159px;font-size:28px;line-height:28px;color:#020817;transform:scaleY(1.1);transform-origin:0 21px;">GET</div>
<div class="t m" style="left:1424px;top:1159px;font-size:28px;line-height:28px;color:#020817;transform:scaleY(1.1);transform-origin:0 21px;">acme-shop.com</div>
<div class="t m" style="left:1751px;top:1159px;font-size:28px;line-height:28px;color:#020817;transform:scaleY(1.1);transform-origin:0 21px;">/bikes/gravel</div>
<div class="t m" style="left:2079px;top:1159px;font-size:28px;line-height:28px;color:#020817;transform:scaleY(1.1);transform-origin:0 21px;">1,190<span style="color:#64748b">ms</span></div>
<div class="t m" style="left:2323px;top:1159px;font-size:28px;line-height:28px;color:#020817;transform:scaleY(1.1);transform-origin:0 21px;">syd</div>
<div class="t" style="left:2382px;top:1157px;font-size:28px;line-height:28px;color:#64748b;">-</div>
<div class="t" style="left:2400px;top:1157px;font-size:28px;line-height:28px;color:#64748b;letter-spacing:0.8px;">Sydney</div>
<div class="b" style="left:2719px;top:1155px;width:35.0px;height:32px;background:#75d0a0"></div>
<div class="b" style="left:2754.0px;top:1155px;width:27.8px;height:32px;background:#70cadf"></div>
<div class="b" style="left:2781.8px;top:1155px;width:19.2px;height:32px;background:#79a7f8"></div>
<div class="b" style="left:2801.0px;top:1155px;width:161.0px;height:32px;background:#b08cf9"></div>
<div class="b" style="left:576px;top:1282px;width:2400px;height:2px;background:#e2e8f0"></div>
<svg class="ic" style="left:592px;top:1230px;" width="32" height="32" viewBox="0 0 24 24" fill="none" stroke="#64cd9c" stroke-width="1.9" stroke-linecap="round" stroke-linejoin="round"><path d="M20 6 9 17l-5-5"/></svg>
<div class="t m" style="left:655px;top:1234px;font-size:28px;line-height:28px;color:#020817;transform:scaleY(1.1);transform-origin:0 21px;">Jan 30, 2025 12:32:03</div>
<div class="t m" style="left:1121px;top:1234px;font-size:28px;line-height:28px;color:#22c55e;transform:scaleY(1.1);transform-origin:0 21px;">200</div>
<div class="t m" style="left:1261px;top:1234px;font-size:28px;line-height:28px;color:#020817;transform:scaleY(1.1);transform-origin:0 21px;">GET</div>
<div class="t m" style="left:1424px;top:1234px;font-size:28px;line-height:28px;color:#020817;transform:scaleY(1.1);transform-origin:0 21px;">acme-shop.com</div>
<div class="t m" style="left:1751px;top:1234px;font-size:28px;line-height:28px;color:#020817;transform:scaleY(1.1);transform-origin:0 21px;">/bikes/gravel</div>
<div class="t m" style="left:2079px;top:1234px;font-size:28px;line-height:28px;color:#020817;transform:scaleY(1.1);transform-origin:0 21px;">873<span style="color:#64748b">ms</span></div>
<div class="t m" style="left:2323px;top:1234px;font-size:28px;line-height:28px;color:#020817;transform:scaleY(1.1);transform-origin:0 21px;">fra</div>
<div class="t" style="left:2382px;top:1232px;font-size:28px;line-height:28px;color:#64748b;">-</div>
<div class="t" style="left:2400px;top:1232px;font-size:28px;line-height:28px;color:#64748b;letter-spacing:1.17px;">Frankfurt</div>
<div class="b" style="left:2719px;top:1230px;width:34.1px;height:32px;background:#75d0a0"></div>
<div class="b" style="left:2753.1px;top:1230px;width:57.9px;height:32px;background:#70cadf"></div>
<div class="b" style="left:2811.0px;top:1230px;width:18.0px;height:32px;background:#79a7f8"></div>
<div class="b" style="left:2829.0px;top:1230px;width:133.0px;height:32px;background:#b08cf9"></div>
<div class="b" style="left:576px;top:1357px;width:2400px;height:2px;background:#e2e8f0"></div>
<svg class="ic" style="left:592px;top:1305px;" width="32" height="32" viewBox="0 0 24 24" fill="none" stroke="#64cd9c" stroke-width="1.9" stroke-linecap="round" stroke-linejoin="round"><path d="M20 6 9 17l-5-5"/></svg>
<div class="t m" style="left:655px;top:1309px;font-size:28px;line-height:28px;color:#020817;transform:scaleY(1.1);transform-origin:0 21px;">Jan 30, 2025 12:32:03</div>
<div class="t m" style="left:1121px;top:1309px;font-size:28px;line-height:28px;color:#22c55e;transform:scaleY(1.1);transform-origin:0 21px;">200</div>
<div class="t m" style="left:1261px;top:1309px;font-size:28px;line-height:28px;color:#020817;transform:scaleY(1.1);transform-origin:0 21px;">GET</div>
<div class="t m" style="left:1424px;top:1309px;font-size:28px;line-height:28px;color:#020817;transform:scaleY(1.1);transform-origin:0 21px;">acme-shop.com</div>
<div class="t m" style="left:1751px;top:1309px;font-size:28px;line-height:28px;color:#020817;transform:scaleY(1.1);transform-origin:0 21px;">/bikes/gravel</div>
<div class="t m" style="left:2079px;top:1309px;font-size:28px;line-height:28px;color:#020817;transform:scaleY(1.1);transform-origin:0 21px;">1,254<span style="color:#64748b">ms</span></div>
<div class="t m" style="left:2323px;top:1309px;font-size:28px;line-height:28px;color:#020817;transform:scaleY(1.1);transform-origin:0 21px;">hkg</div>
<div class="t" style="left:2382px;top:1307px;font-size:28px;line-height:28px;color:#64748b;">-</div>
<div class="t" style="left:2400px;top:1307px;font-size:28px;line-height:28px;color:#64748b;letter-spacing:0.95px;">Hong Kong</div>
<div class="b" style="left:2719px;top:1305px;width:16.0px;height:32px;background:#75d0a0"></div>
<div class="b" style="left:2735.0px;top:1305px;width:69.0px;height:32px;background:#70cadf"></div>
<div class="b" style="left:2804.0px;top:1305px;width:19.0px;height:32px;background:#79a7f8"></div>
<div class="b" style="left:2823.0px;top:1305px;width:139.0px;height:32px;background:#b08cf9"></div>
<div class="b" style="left:576px;top:1432px;width:2400px;height:2px;background:#e2e8f0"></div>
<svg class="ic" style="left:592px;top:1380px;" width="32" height="32" viewBox="0 0 24 24" fill="none" stroke="#64cd9c" stroke-width="1.9" stroke-linecap="round" stroke-linejoin="round"><path d="M20 6 9 17l-5-5"/></svg>
<div class="t m" style="left:655px;top:1384px;font-size:28px;line-height:28px;color:#020817;transform:scaleY(1.1);transform-origin:0 21px;">Jan 30, 2025 11:32:03</div>
<div class="t m" style="left:1121px;top:1384px;font-size:28px;line-height:28px;color:#22c55e;transform:scaleY(1.1);transform-origin:0 21px;">200</div>
<div class="t m" style="left:1261px;top:1384px;font-size:28px;line-height:28px;color:#020817;transform:scaleY(1.1);transform-origin:0 21px;">GET</div>
<div class="t m" style="left:1424px;top:1384px;font-size:28px;line-height:28px;color:#020817;transform:scaleY(1.1);transform-origin:0 21px;">acme-shop.com</div>
<div class="t m" style="left:1751px;top:1384px;font-size:28px;line-height:28px;color:#020817;transform:scaleY(1.1);transform-origin:0 21px;">/bikes/gravel</div>
<div class="t m" style="left:2079px;top:1384px;font-size:28px;line-height:28px;color:#020817;transform:scaleY(1.1);transform-origin:0 21px;">1,000<span style="color:#64748b">ms</span></div>
<div class="t m" style="left:2323px;top:1384px;font-size:28px;line-height:28px;color:#020817;transform:scaleY(1.1);transform-origin:0 21px;">ams</div>
<div class="t" style="left:2382px;top:1382px;font-size:28px;line-height:28px;color:#64748b;">-</div>
<div class="t" style="left:2403px;top:1382px;font-size:28px;line-height:28px;color:#64748b;letter-spacing:0.8px;">Amsterdam</div>
<div class="b" style="left:2719px;top:1380px;width:34.1px;height:32px;background:#75d0a0"></div>
<div class="b" style="left:2753.1px;top:1380px;width:25.9px;height:32px;background:#70cadf"></div>
<div class="b" style="left:2779.0px;top:1380px;width:21.1px;height:32px;background:#79a7f8"></div>
<div class="b" style="left:2800.1px;top:1380px;width:161.9px;height:32px;background:#b08cf9"></div>
<div class="b" style="left:576px;top:1507px;width:2400px;height:2px;background:#e2e8f0"></div>
<svg class="ic" style="left:592px;top:1455px;" width="32" height="32" viewBox="0 0 24 24" fill="none" stroke="#64cd9c" stroke-width="1.9" stroke-linecap="round" stroke-linejoin="round"><path d="M20 6 9 17l-5-5"/></svg>
<div class="t m" style="left:655px;top:1459px;font-size:28px;line-height:28px;color:#020817;transform:scaleY(1.1);transform-origin:0 21px;">Jan 30, 2025 11:32:03</div>
<div class="t m" style="left:1121px;top:1459px;font-size:28px;line-height:28px;color:#22c55e;transform:scaleY(1.1);transform-origin:0 21px;">200</div>
<div class="t m" style="left:1261px;top:1459px;font-size:28px;line-height:28px;color:#020817;transform:scaleY(1.1);transform-origin:0 21px;">GET</div>
<div class="t m" style="left:1424px;top:1459px;font-size:28px;line-height:28px;color:#020817;transform:scaleY(1.1);transform-origin:0 21px;">acme-shop.com</div>
<div class="t m" style="left:1751px;top:1459px;font-size:28px;line-height:28px;color:#020817;transform:scaleY(1.1);transform-origin:0 21px;">/bikes/gravel</div>
<div class="t m" style="left:2079px;top:1459px;font-size:28px;line-height:28px;color:#020817;transform:scaleY(1.1);transform-origin:0 21px;">981<span style="color:#64748b">ms</span></div>
<div class="t m" style="left:2323px;top:1459px;font-size:28px;line-height:28px;color:#020817;transform:scaleY(1.1);transform-origin:0 21px;">iad</div>
<div class="t" style="left:2382px;top:1457px;font-size:28px;line-height:28px;color:#64748b;">-</div>
<div class="t" style="left:2402px;top:1457px;font-size:28px;line-height:28px;color:#64748b;letter-spacing:0.55px;">Washington D.C.</div>
<div class="b" style="left:2719px;top:1455px;width:32.0px;height:32px;background:#75d0a0"></div>
<div class="b" style="left:2751.0px;top:1455px;width:27.1px;height:32px;background:#70cadf"></div>
<div class="b" style="left:2778.1px;top:1455px;width:22.9px;height:32px;background:#79a7f8"></div>
<div class="b" style="left:2801.0px;top:1455px;width:161.0px;height:32px;background:#b08cf9"></div>
<div class="b" style="left:576px;top:1582px;width:2400px;height:2px;background:#e2e8f0"></div>
<svg class="ic" style="left:592px;top:1530px;" width="32" height="32" viewBox="0 0 24 24" fill="none" stroke="#64cd9c" stroke-width="1.9" stroke-linecap="round" stroke-linejoin="round"><path d="M20 6 9 17l-5-5"/></svg>
<div class="t m" style="left:655px;top:1534px;font-size:28px;line-height:28px;color:#020817;transform:scaleY(1.1);transform-origin:0 21px;">Jan 30, 2025 11:32:03</div>
<div class="t m" style="left:1121px;top:1534px;font-size:28px;line-height:28px;color:#22c55e;transform:scaleY(1.1);transform-origin:0 21px;">200</div>
<div class="t m" style="left:1261px;top:1534px;font-size:28px;line-height:28px;color:#020817;transform:scaleY(1.1);transform-origin:0 21px;">GET</div>
<div class="t m" style="left:1424px;top:1534px;font-size:28px;line-height:28px;color:#020817;transform:scaleY(1.1);transform-origin:0 21px;">acme-shop.com</div>
<div class="t m" style="left:1751px;top:1534px;font-size:28px;line-height:28px;color:#020817;transform:scaleY(1.1);transform-origin:0 21px;">/bikes/gravel</div>
<div class="t m" style="left:2079px;top:1534px;font-size:28px;line-height:28px;color:#020817;transform:scaleY(1.1);transform-origin:0 21px;">1,029<span style="color:#64748b">ms</span></div>
<div class="t m" style="left:2323px;top:1534px;font-size:28px;line-height:28px;color:#020817;transform:scaleY(1.1);transform-origin:0 21px;">gru</div>
<div class="t" style="left:2382px;top:1532px;font-size:28px;line-height:28px;color:#64748b;">-</div>
<div class="t" style="left:2401px;top:1532px;font-size:28px;line-height:28px;color:#64748b;letter-spacing:0.45px;">Sao Paulo</div>
<div class="b" style="left:2719px;top:1530px;width:28.0px;height:32px;background:#75d0a0"></div>
<div class="b" style="left:2747.0px;top:1530px;width:73.0px;height:32px;background:#70cadf"></div>
<div class="b" style="left:2820.0px;top:1530px;width:16.0px;height:32px;background:#79a7f8"></div>
<div class="b" style="left:2836.0px;top:1530px;width:126.0px;height:32px;background:#b08cf9"></div>
<div class="b" style="left:576px;top:1657px;width:2400px;height:2px;background:#e2e8f0"></div>
<svg class="ic" style="left:592px;top:1605px;" width="32" height="32" viewBox="0 0 24 24" fill="none" stroke="#64cd9c" stroke-width="1.9" stroke-linecap="round" stroke-linejoin="round"><path d="M20 6 9 17l-5-5"/></svg>
<div class="t m" style="left:655px;top:1609px;font-size:28px;line-height:28px;color:#020817;transform:scaleY(1.1);transform-origin:0 21px;">Jan 30, 2025 11:32:03</div>
<div class="t m" style="left:1121px;top:1609px;font-size:28px;line-height:28px;color:#22c55e;transform:scaleY(1.1);transform-origin:0 21px;">200</div>
<div class="t m" style="left:1261px;top:1609px;font-size:28px;line-height:28px;color:#020817;transform:scaleY(1.1);transform-origin:0 21px;">GET</div>
<div class="t m" style="left:1424px;top:1609px;font-size:28px;line-height:28px;color:#020817;transform:scaleY(1.1);transform-origin:0 21px;">acme-shop.com</div>
<div class="t m" style="left:1751px;top:1609px;font-size:28px;line-height:28px;color:#020817;transform:scaleY(1.1);transform-origin:0 21px;">/bikes/gravel</div>
<div class="t m" style="left:2079px;top:1609px;font-size:28px;line-height:28px;color:#020817;transform:scaleY(1.1);transform-origin:0 21px;">1,015<span style="color:#64748b">ms</span></div>
<div class="t m" style="left:2323px;top:1609px;font-size:28px;line-height:28px;color:#020817;transform:scaleY(1.1);transform-origin:0 21px;">syd</div>
<div class="t" style="left:2382px;top:1607px;font-size:28px;line-height:28px;color:#64748b;">-</div>
<div class="t" style="left:2400px;top:1607px;font-size:28px;line-height:28px;color:#64748b;letter-spacing:0.8px;">Sydney</div>
<div class="b" style="left:2719px;top:1605px;width:29.0px;height:32px;background:#75d0a0"></div>
<div class="b" style="left:2748.0px;top:1605px;width:52.1px;height:32px;background:#70cadf"></div>
<div class="b" style="left:2800.1px;top:1605px;width:20.8px;height:32px;background:#79a7f8"></div>
<div class="b" style="left:2820.9px;top:1605px;width:141.1px;height:32px;background:#b08cf9"></div>
<div class="b" style="left:576px;top:1732px;width:2400px;height:2px;background:#e2e8f0"></div>
<svg class="ic" style="left:592px;top:1680px;" width="32" height="32" viewBox="0 0 24 24" fill="none" stroke="#64cd9c" stroke-width="1.9" stroke-linecap="round" stroke-linejoin="round"><path d="M20 6 9 17l-5-5"/></svg>
<div class="t m" style="left:655px;top:1684px;font-size:28px;line-height:28px;color:#020817;transform:scaleY(1.1);transform-origin:0 21px;">Jan 30, 2025 11:32:03</div>
<div class="t m" style="left:1121px;top:1684px;font-size:28px;line-height:28px;color:#22c55e;transform:scaleY(1.1);transform-origin:0 21px;">200</div>
<div class="t m" style="left:1261px;top:1684px;font-size:28px;line-height:28px;color:#020817;transform:scaleY(1.1);transform-origin:0 21px;">GET</div>
<div class="t m" style="left:1424px;top:1684px;font-size:28px;line-height:28px;color:#020817;transform:scaleY(1.1);transform-origin:0 21px;">acme-shop.com</div>
<div class="t m" style="left:1751px;top:1684px;font-size:28px;line-height:28px;color:#020817;transform:scaleY(1.1);transform-origin:0 21px;">/bikes/gravel</div>
<div class="t m" style="left:2079px;top:1684px;font-size:28px;line-height:28px;color:#020817;transform:scaleY(1.1);transform-origin:0 21px;">990<span style="color:#64748b">ms</span></div>
<div class="t m" style="left:2323px;top:1684px;font-size:28px;line-height:28px;color:#020817;transform:scaleY(1.1);transform-origin:0 21px;">fra</div>
<div class="t" style="left:2382px;top:1682px;font-size:28px;line-height:28px;color:#64748b;">-</div>
<div class="t" style="left:2400px;top:1682px;font-size:28px;line-height:28px;color:#64748b;letter-spacing:1.17px;">Frankfurt</div>
<div class="b" style="left:2719px;top:1680px;width:32.0px;height:32px;background:#75d0a0"></div>
<div class="b" style="left:2751.0px;top:1680px;width:69.9px;height:32px;background:#70cadf"></div>
<div class="b" style="left:2820.9px;top:1680px;width:18.1px;height:32px;background:#79a7f8"></div>
<div class="b" style="left:2839.0px;top:1680px;width:123.0px;height:32px;background:#b08cf9"></div>
<div class="b" style="left:576px;top:1807px;width:2400px;height:2px;background:#e2e8f0"></div>
<svg class="ic" style="left:592px;top:1755px;" width="32" height="32" viewBox="0 0 24 24" fill="none" stroke="#64cd9c" stroke-width="1.9" stroke-linecap="round" stroke-linejoin="round"><path d="M20 6 9 17l-5-5"/></svg>
<div class="t m" style="left:655px;top:1759px;font-size:28px;line-height:28px;color:#020817;transform:scaleY(1.1);transform-origin:0 21px;">Jan 30, 2025 11:32:03</div>
<div class="t m" style="left:1121px;top:1759px;font-size:28px;line-height:28px;color:#22c55e;transform:scaleY(1.1);transform-origin:0 21px;">200</div>
<div class="t m" style="left:1261px;top:1759px;font-size:28px;line-height:28px;color:#020817;transform:scaleY(1.1);transform-origin:0 21px;">GET</div>
<div class="t m" style="left:1424px;top:1759px;font-size:28px;line-height:28px;color:#020817;transform:scaleY(1.1);transform-origin:0 21px;">acme-shop.com</div>
<div class="t m" style="left:1751px;top:1759px;font-size:28px;line-height:28px;color:#020817;transform:scaleY(1.1);transform-origin:0 21px;">/bikes/gravel</div>
<div class="t m" style="left:2079px;top:1759px;font-size:28px;line-height:28px;color:#020817;transform:scaleY(1.1);transform-origin:0 21px;">1,019<span style="color:#64748b">ms</span></div>
<div class="t m" style="left:2323px;top:1759px;font-size:28px;line-height:28px;color:#020817;transform:scaleY(1.1);transform-origin:0 21px;">hkg</div>
<div class="t" style="left:2382px;top:1757px;font-size:28px;line-height:28px;color:#64748b;">-</div>
<div class="t" style="left:2400px;top:1757px;font-size:28px;line-height:28px;color:#64748b;letter-spacing:0.95px;">Hong Kong</div>
<div class="b" style="left:2719px;top:1755px;width:22.0px;height:32px;background:#75d0a0"></div>
<div class="b" style="left:2741.0px;top:1755px;width:26.0px;height:32px;background:#70cadf"></div>
<div class="b" style="left:2767.0px;top:1755px;width:19.9px;height:32px;background:#79a7f8"></div>
<div class="b" style="left:2786.9px;top:1755px;width:175.1px;height:32px;background:#b08cf9"></div>
<div class="b" style="left:576px;top:1882px;width:2400px;height:2px;background:#e2e8f0"></div>
<svg class="ic" style="left:592px;top:1830px;" width="32" height="32" viewBox="0 0 24 24" fill="none" stroke="#64cd9c" stroke-width="1.9" stroke-linecap="round" stroke-linejoin="round"><path d="M20 6 9 17l-5-5"/></svg>
<div class="t m" style="left:655px;top:1834px;font-size:28px;line-height:28px;color:#020817;transform:scaleY(1.1);transform-origin:0 21px;">Jan 30, 2025 10:32:03</div>
<div class="t m" style="left:1121px;top:1834px;font-size:28px;line-height:28px;color:#22c55e;transform:scaleY(1.1);transform-origin:0 21px;">200</div>
<div class="t m" style="left:1261px;top:1834px;font-size:28px;line-height:28px;color:#020817;transform:scaleY(1.1);transform-origin:0 21px;">GET</div>
<div class="t m" style="left:1424px;top:1834px;font-size:28px;line-height:28px;color:#020817;transform:scaleY(1.1);transform-origin:0 21px;">acme-shop.com</div>
<div class="t m" style="left:1751px;top:1834px;font-size:28px;line-height:28px;color:#020817;transform:scaleY(1.1);transform-origin:0 21px;">/bikes/mounta…</div>
<div class="t m" style="left:2079px;top:1834px;font-size:28px;line-height:28px;color:#020817;transform:scaleY(1.1);transform-origin:0 21px;">1,000<span style="color:#64748b">ms</span></div>
<div class="t m" style="left:2323px;top:1834px;font-size:28px;line-height:28px;color:#020817;transform:scaleY(1.1);transform-origin:0 21px;">ams</div>
<div class="t" style="left:2382px;top:1832px;font-size:28px;line-height:28px;color:#64748b;">-</div>
<div class="t" style="left:2403px;top:1832px;font-size:28px;line-height:28px;color:#64748b;letter-spacing:0.8px;">Amsterdam</div>
<div class="b" style="left:2719px;top:1830px;width:26.0px;height:32px;background:#75d0a0"></div>
<div class="b" style="left:2745.0px;top:1830px;width:55.1px;height:32px;background:#70cadf"></div>
<div class="b" style="left:2800.1px;top:1830px;width:20.8px;height:32px;background:#79a7f8"></div>
<div class="b" style="left:2820.9px;top:1830px;width:141.1px;height:32px;background:#b08cf9"></div>
<div class="b" style="left:576px;top:1957px;width:2400px;height:2px;background:#e2e8f0"></div>
<svg class="ic" style="left:592px;top:1905px;" width="32" height="32" viewBox="0 0 24 24" fill="none" stroke="#64cd9c" stroke-width="1.9" stroke-linecap="round" stroke-linejoin="round"><path d="M20 6 9 17l-5-5"/></svg>
<div class="t m" style="left:655px;top:1909px;font-size:28px;line-height:28px;color:#020817;transform:scaleY(1.1);transform-origin:0 21px;">Jan 30, 2025 10:32:03</div>
<div class="t m" style="left:1121px;top:1909px;font-size:28px;line-height:28px;color:#22c55e;transform:scaleY(1.1);transform-origin:0 21px;">200</div>
<div class="t m" style="left:1261px;top:1909px;font-size:28px;line-height:28px;color:#020817;transform:scaleY(1.1);transform-origin:0 21px;">GET</div>
<div class="t m" style="left:1424px;top:1909px;font-size:28px;line-height:28px;color:#020817;transform:scaleY(1.1);transform-origin:0 21px;">acme-shop.com</div>
<div class="t m" style="left:1751px;top:1909px;font-size:28px;line-height:28px;color:#020817;transform:scaleY(1.1);transform-origin:0 21px;">/bikes/mounta…</div>
<div class="t m" style="left:2079px;top:1909px;font-size:28px;line-height:28px;color:#020817;transform:scaleY(1.1);transform-origin:0 21px;">857<span style="color:#64748b">ms</span></div>
<div class="t m" style="left:2323px;top:1909px;font-size:28px;line-height:28px;color:#020817;transform:scaleY(1.1);transform-origin:0 21px;">iad</div>
<div class="t" style="left:2382px;top:1907px;font-size:28px;line-height:28px;color:#64748b;">-</div>
<div class="t" style="left:2402px;top:1907px;font-size:28px;line-height:28px;color:#64748b;letter-spacing:0.55px;">Washington D.C.</div>
<div class="b" style="left:2719px;top:1905px;width:16.9px;height:32px;background:#75d0a0"></div>
<div class="b" style="left:2735.9px;top:1905px;width:41.0px;height:32px;background:#70cadf"></div>
<div class="b" style="left:2776.9px;top:1905px;width:13.0px;height:32px;background:#79a7f8"></div>
<div class="b" style="left:2789.9px;top:1905px;width:172.1px;height:32px;background:#b08cf9"></div>
<div class="b" style="left:576px;top:2032px;width:2400px;height:2px;background:#e2e8f0"></div>
<svg class="ic" style="left:592px;top:1980px;" width="32" height="32" viewBox="0 0 24 24" fill="none" stroke="#ef4444" stroke-width="1.9" stroke-linecap="round" stroke-linejoin="round"><path d="M18 6 6 18"/><path d="m6 6 12 12"/></svg>
<div class="t m" style="left:655px;top:1984px;font-size:28px;line-height:28px;color:#020817;transform:scaleY(1.1);transform-origin:0 21px;">Jan 30, 2025 10:32:03</div>
<div class="t m" style="left:1121px;top:1984px;font-size:28px;line-height:28px;color:#f97316;transform:scaleY(1.1);transform-origin:0 21px;">400</div>
<div class="t m" style="left:1261px;top:1984px;font-size:28px;line-height:28px;color:#020817;transform:scaleY(1.1);transform-origin:0 21px;">GET</div>
<div class="t m" style="left:1424px;top:1984px;font-size:28px;line-height:28px;color:#020817;transform:scaleY(1.1);transform-origin:0 21px;">acme-shop.com</div>
<div class="t m" style="left:1751px;top:1984px;font-size:28px;line-height:28px;color:#020817;transform:scaleY(1.1);transform-origin:0 21px;">/bikes/mounta…</div>
<div class="t m" style="left:2079px;top:1984px;font-size:28px;line-height:28px;color:#020817;transform:scaleY(1.1);transform-origin:0 21px;">1,215<span style="color:#64748b">ms</span></div>
<div class="t m" style="left:2323px;top:1984px;font-size:28px;line-height:28px;color:#020817;transform:scaleY(1.1);transform-origin:0 21px;">gru</div>
<div class="t" style="left:2382px;top:1982px;font-size:28px;line-height:28px;color:#64748b;">-</div>
<div class="t" style="left:2401px;top:1982px;font-size:28px;line-height:28px;color:#64748b;letter-spacing:0.45px;">Sao Paulo</div>
<div class="b" style="left:2719px;top:1980px;width:21.0px;height:32px;background:#75d0a0"></div>
<div class="b" style="left:2740.0px;top:1980px;width:50.0px;height:32px;background:#70cadf"></div>
<div class="b" style="left:2790.0px;top:1980px;width:20.0px;height:32px;background:#79a7f8"></div>
<div class="b" style="left:2810.0px;top:1980px;width:152.0px;height:32px;background:#b08cf9"></div>
<div class="b" style="left:2600px;top:1940px;width:346px;height:80px;background:#141a2b;border-radius:12px"></div>
<div class="t" style="left:2633px;top:1967px;font-size:28px;line-height:28px;color:#f8fafc;letter-spacing:0.75px;-webkit-text-stroke:0.5px currentColor;">View GitHub Repo</div>
<svg class="ic" style="left:2882px;top:1964px;" width="32" height="32" viewBox="0 0 24 24" fill="none" stroke="#f8fafc" stroke-width="2" stroke-linecap="round" stroke-linejoin="round"><path d="m9 18 6-6-6-6"/></svg>
<div class="b" style="left:0px;top:0px;width:5px;height:5px;background:radial-gradient(circle at 100% 100%, rgba(2,8,23,0) 4.3px, #020817 5.3px)"></div>
<div class="b" style="left:2971px;top:0px;width:5px;height:5px;background:radial-gradient(circle at 0 100%, rgba(2,8,23,0) 4.3px, #020817 5.3px)"></div>
<div class="b" style="left:0px;top:2045px;width:5px;height:5px;background:radial-gradient(circle at 100% 0, rgba(2,8,23,0) 4.3px, #020817 5.3px)"></div>
<div class="b" style="left:2971px;top:2045px;width:5px;height:5px;background:radial-gradient(circle at 0 0, rgba(2,8,23,0) 4.3px, #020817 5.3px)"></div>
</div></body></html>
